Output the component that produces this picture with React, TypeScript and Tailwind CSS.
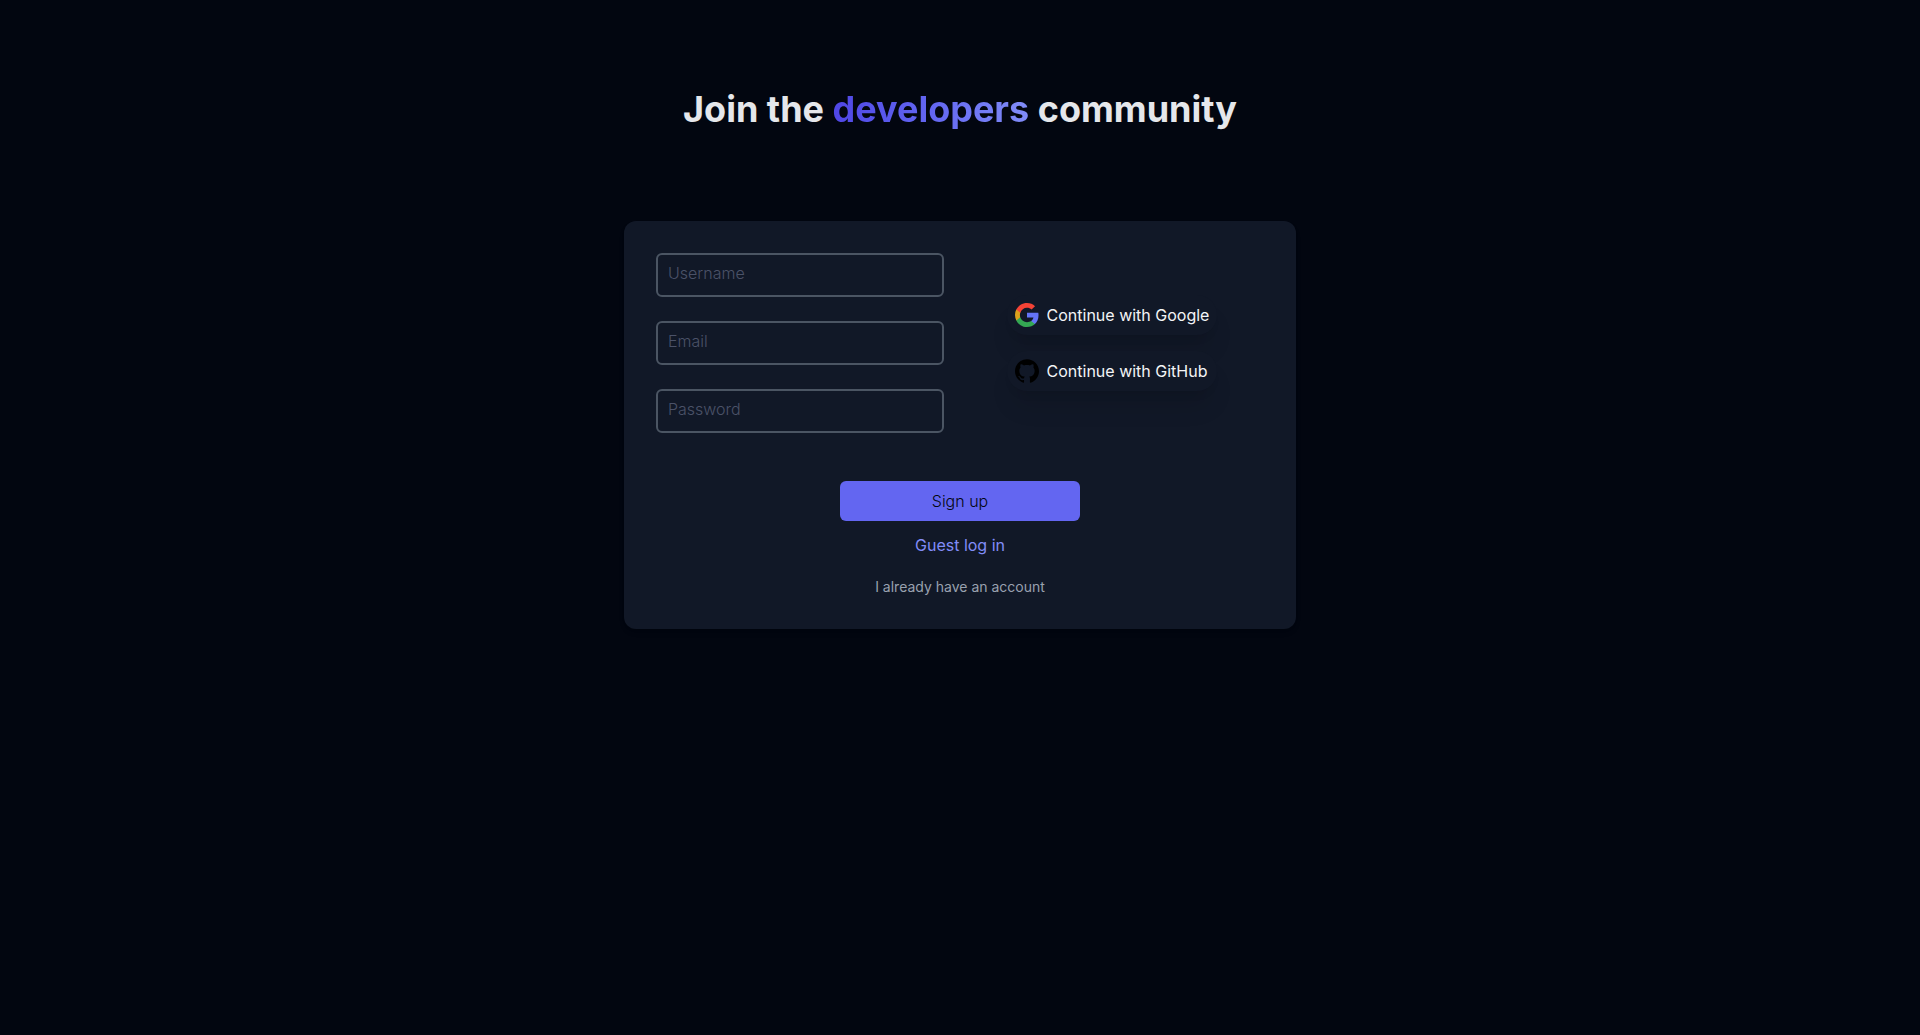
import { useState } from 'react';
import type { FormEvent } from 'react';
import { SiGithub } from 'react-icons/si';

const fields = [
  { name: 'username', label: 'Username', type: 'text' },
  { name: 'email', label: 'Email', type: 'email' },
  { name: 'password', label: 'Password', type: 'password' },
];

function GoogleIcon() {
  return (
    <svg viewBox="1 1 22 22" className="size-6" aria-hidden="true">
      <path
        fill="#6474f6"
        d="M22.56 12.25c0-.78-.07-1.53-.2-2.25H12v4.26h5.92c-.26 1.37-1.04 2.53-2.21 3.31v2.77h3.57c2.08-1.92 3.28-4.74 3.28-8.09z"
      />
      <path
        fill="#34a853"
        d="M12 23c2.97 0 5.46-.98 7.28-2.66l-3.57-2.77c-.98.66-2.23 1.06-3.71 1.06-2.86 0-5.29-1.93-6.16-4.53H2.18v2.84C3.99 20.53 7.7 23 12 23z"
      />
      <path
        fill="#dba11c"
        d="M5.84 14.09c-.22-.66-.35-1.36-.35-2.09s.13-1.43.35-2.09V7.07H2.18C1.43 8.55 1 10.22 1 12s.43 3.45 1.18 4.93l3.66-2.84z"
      />
      <path
        fill="#f44336"
        d="M12 5.38c1.62 0 3.06.56 4.21 1.64l3.15-3.15C17.45 2.09 14.97 1 12 1 7.7 1 3.99 3.47 2.18 7.07l3.66 2.84c.87-2.6 3.3-4.53 6.16-4.53z"
      />
    </svg>
  );
}

export default function App() {
  const [values, setValues] = useState<Record<string, string>>({});

  const handleSubmit = (e: FormEvent) => {
    e.preventDefault();
  };

  return (
    <main className="min-h-screen bg-[#020610] px-4 pt-[89px] pb-16 font-['Inter',sans-serif]">
      <h1 className="text-center text-4xl font-bold text-gray-200">
        Join the{' '}
        <span className="bg-linear-to-r from-[#4f46e5] via-[#6366f1] to-[#818cf8] bg-clip-text text-transparent">
          developers
        </span>{' '}
        community
      </h1>

      <form
        onSubmit={handleSubmit}
        className="mx-auto mt-23 flex max-w-2xl flex-col items-center rounded-xl bg-[#111827] p-8 shadow-md"
      >
        <div className="grid w-full items-center sm:grid-cols-2">
          {/* Credentials */}
          <div className="flex flex-col gap-6 sm:pr-4">
            {fields.map((field) => (
              <input
                key={field.name}
                type={field.type}
                name={field.name}
                aria-label={field.label}
                placeholder={field.label}
                value={values[field.name] ?? ''}
                onChange={(e) => setValues({ ...values, [field.name]: e.target.value })}
                className="h-11 w-full rounded-md border-2 border-[#4b5563] bg-transparent px-2.5 pb-1 font-light text-gray-200 outline-none placeholder:text-[#4b5268] focus:border-[#6366f1]"
              />
            ))}
          </div>

          {/* Providers */}
          <div className="mx-auto flex w-fit flex-col gap-4">
            <button
              type="button"
              className="flex h-10 items-center gap-2 rounded-full bg-[#111827] px-2 text-gray-100 shadow-xl"
            >
              <GoogleIcon />
              Continue with Google
            </button>
            <button
              type="button"
              className="flex h-10 items-center gap-2 rounded-full bg-[#111827] px-2 text-gray-100 shadow-xl"
            >
              <SiGithub className="size-6 text-black" />
              Continue with GitHub
            </button>
          </div>
        </div>

        <button
          type="submit"
          className="mt-12 h-10 w-60 rounded-md bg-[#6366f1] font-light text-[#030712]"
        >
          Sign up
        </button>
        <button type="button" className="mt-3 text-[#818cf8]">
          Guest log in
        </button>
        <a href="#login" className="mt-5 text-sm text-gray-400">
          I already have an account
        </a>
      </form>
    </main>
  );
}
